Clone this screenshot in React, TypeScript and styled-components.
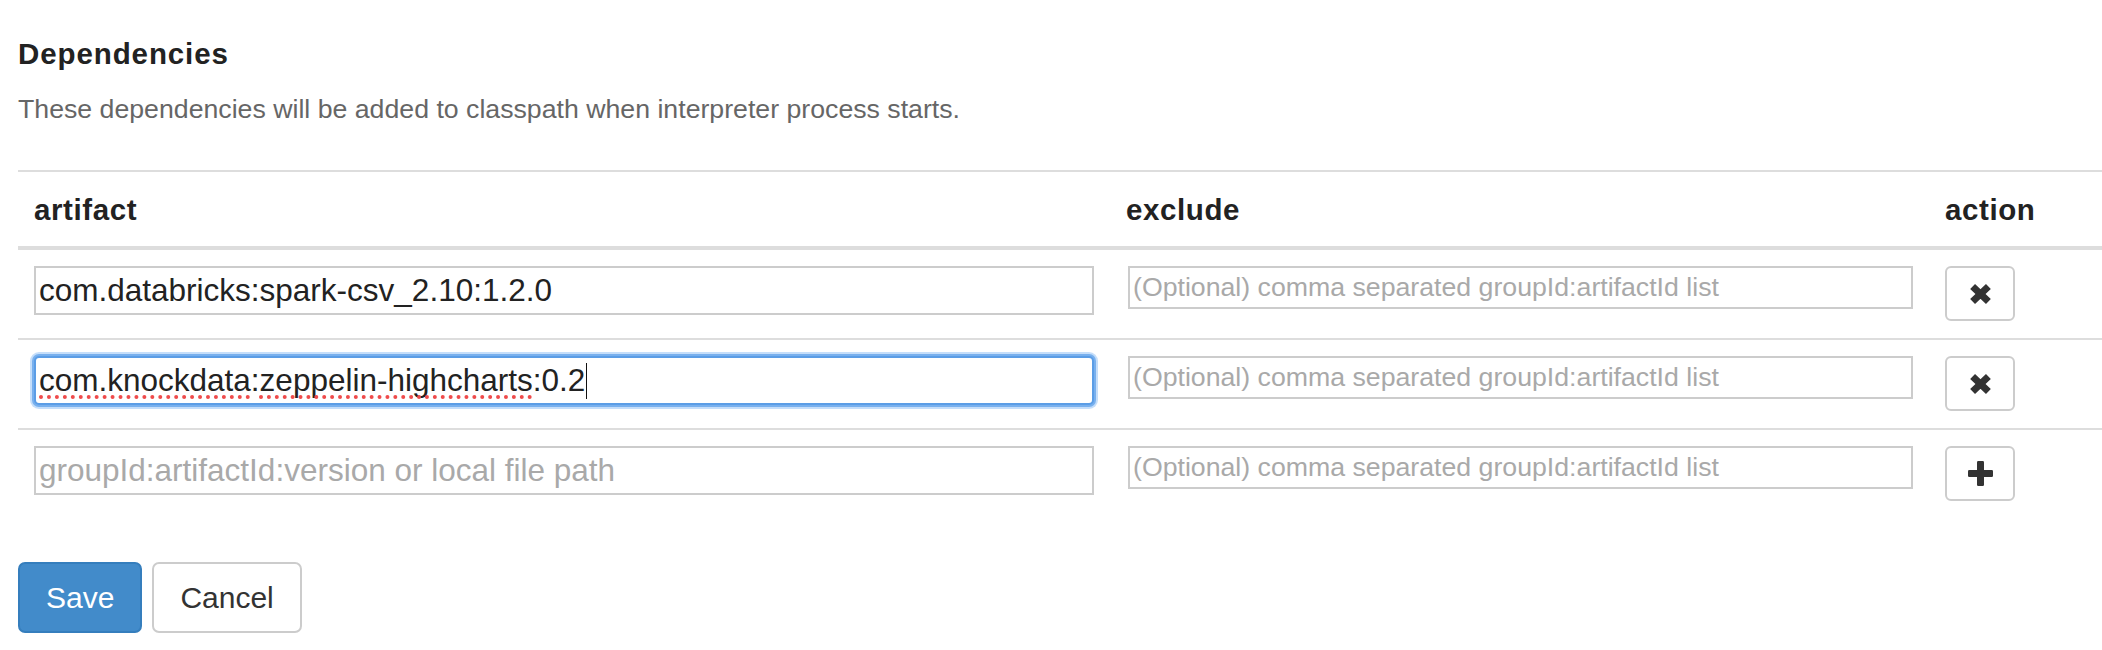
import React from "react";
import styled, { createGlobalStyle, css } from "styled-components";

const GlobalStyle = createGlobalStyle`
  html, body { margin: 0; padding: 0; background: #fff; }
  body {
    font-family: "Liberation Sans", Arial, Helvetica, sans-serif;
    color: #333;
  }
  *, *::before, *::after { box-sizing: border-box; }
`;

const Page = styled.div`
  width: 2102px;
  height: 650px;
  overflow: hidden;
  padding: 37px 0 0 18px;
`;

const Title = styled.h4`
  margin: 0;
  font-size: 29.5px;
  line-height: 34px;
  font-weight: 700;
  letter-spacing: 0.9px;
  color: #222;
`;

const Description = styled.p`
  margin: 22px 0 0;
  font-size: 26.7px;
  line-height: 32px;
  color: #666;
`;

const Table = styled.table`
  margin-top: 45px;
  width: 2084px;
  border-collapse: separate;
  border-spacing: 0;
  table-layout: fixed;
`;

const Col = styled.col<{ $width: number }>`
  width: ${(p) => p.$width}px;
`;

const HeadCell = styled.th`
  padding: 21px 16px 19px;
  border-top: 2px solid #ddd;
  border-bottom: 4px solid #ddd;
  text-align: left;
  font-size: 29.5px;
  line-height: 34px;
  font-weight: 700;
  letter-spacing: 0.6px;
  color: #222;
`;

const Row = styled.tr`
  & + & > td {
    border-top: 2px solid #ddd;
  }
`;

const Cell = styled.td`
  padding: 16px 16px 17px;
  vertical-align: top;
`;

const FieldWrap = styled.div`
  position: relative;
`;

const fieldBase = css`
  display: block;
  margin: 0;
  padding: 0 3px;
  border: 2px solid #ccc;
  border-radius: 0;
  background: #fff;
  color: #222;
  font-family: inherit;
  outline: none;
  &::placeholder {
    color: #a9a9a9;
    opacity: 1;
  }
`;

const ArtifactInput = styled.input<{ $focused?: boolean }>`
  ${fieldBase};
  width: 100%;
  height: 49px;
  font-size: 31.5px;
  ${(p) =>
    p.$focused &&
    css`
      border-color: #5b9de6;
      border-radius: 5px;
      box-shadow: 0 0 0 2px #78b0ee, 0 0 0 4px rgba(150, 195, 245, 0.55);
    `}
`;

const ExcludeInput = styled.input`
  ${fieldBase};
  width: calc(100% - 2px);
  margin-left: 2px;
  height: 43px;
  font-size: 26.7px;
`;

const SpellLayer = styled.div`
  position: absolute;
  inset: 0;
  display: flex;
  align-items: center;
  padding: 0 3px;
  border: 2px solid transparent;
  font-size: 31.5px;
  color: transparent;
  white-space: pre;
  pointer-events: none;
`;

const Misspelled = styled.span`
  text-decoration: underline dotted #ef4b4b;
  text-decoration-thickness: 3.5px;
  text-underline-offset: 4px;
  text-decoration-skip-ink: none;
`;

const Caret = styled.span`
  display: inline-block;
  width: 0;
  height: 36px;
  margin-left: 1px;
  border-left: 1.5px solid #111;
  vertical-align: -8px;
`;

const IconButton = styled.button`
  display: flex;
  align-items: center;
  justify-content: center;
  width: 70px;
  height: 55px;
  margin: 0;
  padding: 0;
  border: 2px solid #ccc;
  border-radius: 6px;
  background: #fff;
  color: #333;
`;

const Actions = styled.div`
  display: flex;
  gap: 10px;
  margin-top: 44px;
`;

const FormButton = styled.button<{ $primary?: boolean }>`
  height: 71px;
  margin: 0;
  padding: 0 26px;
  border: 2px solid ${(p) => (p.$primary ? "#357ebd" : "#ccc")};
  border-radius: 7px;
  background: ${(p) => (p.$primary ? "#428bca" : "#fff")};
  color: ${(p) => (p.$primary ? "#fff" : "#333")};
  font-family: inherit;
  font-size: 30px;
  line-height: 1;
`;

const RemoveIcon = () => (
  <svg width="23" height="22" viewBox="0 0 23 22" aria-hidden="true">
    <path
      d="M3.6 3.4 L19.4 18.6 M19.4 3.4 L3.6 18.6"
      stroke="currentColor"
      strokeWidth="7"
    />
  </svg>
);

const PlusIcon = () => (
  <svg width="25" height="25" viewBox="0 0 25 25" aria-hidden="true">
    <rect x="9" y="0" width="7" height="25" rx="1.2" fill="currentColor" />
    <rect x="0" y="9" width="25" height="7" rx="1.2" fill="currentColor" />
  </svg>
);

type Dep = {
  artifact: string;
  focused?: boolean;
};

const deps: Dep[] = [
  { artifact: "com.databricks:spark-csv_2.10:1.2.0" },
  { artifact: "com.knockdata:zeppelin-highcharts:0.2", focused: true },
];

const EXCLUDE_PH = "(Optional) comma separated groupId:artifactId list";

export default function App() {
  return (
    <>
      <GlobalStyle />
      <Page>
        <Title>Dependencies</Title>
        <Description>
          These dependencies will be added to classpath when interpreter process starts.
        </Description>
        <Table>
          <colgroup>
            <Col $width={1092} />
            <Col $width={819} />
            <Col $width={173} />
          </colgroup>
          <thead>
            <tr>
              <HeadCell>artifact</HeadCell>
              <HeadCell>exclude</HeadCell>
              <HeadCell>action</HeadCell>
            </tr>
          </thead>
          <tbody>
            {deps.map((d) => (
              <Row key={d.artifact}>
                <Cell>
                  <FieldWrap>
                    <ArtifactInput
                      $focused={d.focused}
                      defaultValue={d.artifact}
                      spellCheck={false}
                    />
                    {d.focused && (
                      <SpellLayer aria-hidden="true">
                        <span>
                          <Misspelled>com.knockdata</Misspelled>:
                          <Misspelled>zeppelin-highcharts</Misspelled>:0.2
                          <Caret />
                        </span>
                      </SpellLayer>
                    )}
                  </FieldWrap>
                </Cell>
                <Cell>
                  <ExcludeInput placeholder={EXCLUDE_PH} />
                </Cell>
                <Cell>
                  <IconButton aria-label="remove">
                    <RemoveIcon />
                  </IconButton>
                </Cell>
              </Row>
            ))}
            <Row>
              <Cell>
                <ArtifactInput placeholder="groupId:artifactId:version or local file path" />
              </Cell>
              <Cell>
                <ExcludeInput placeholder={EXCLUDE_PH} />
              </Cell>
              <Cell>
                <IconButton aria-label="add">
                  <PlusIcon />
                </IconButton>
              </Cell>
            </Row>
          </tbody>
        </Table>
        <Actions>
          <FormButton $primary>Save</FormButton>
          <FormButton>Cancel</FormButton>
        </Actions>
      </Page>
    </>
  );
}
